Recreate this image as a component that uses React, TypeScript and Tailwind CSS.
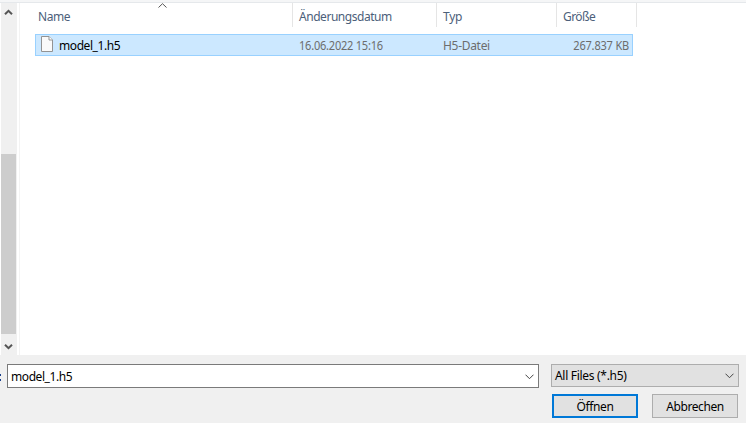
import type { ReactNode } from "react";

function Chevron({ d, w, h, className }: { d: string; w: number; h: number; className: string }) {
  return (
    <svg width={w} height={h} viewBox={`0 0 ${w} ${h}`} fill="none" stroke="currentColor" className={`shrink-0 ${className}`}>
      <path d={d} />
    </svg>
  );
}

function HeaderCell({ children, className }: { children: ReactNode; className: string }) {
  return (
    <div className={`h-6 border-r border-[#e5e5e5] pt-[6px] leading-4 text-[#4c607a] ${className}`}>
      {children}
    </div>
  );
}

function FileIcon() {
  return (
    <svg width="12" height="16" viewBox="0 0 12 16" className="-mt-[2px] shrink-0">
      <path d="M0.5 0.5H8L11.5 4V15.5H0.5Z" fill="#fafafa" stroke="#939393" />
      <path d="M8 0.5V4H11.5" fill="#ffffff" stroke="#939393" />
    </svg>
  );
}

export default function App() {
  return (
    <div className="flex h-[423px] w-[746px] flex-col overflow-hidden bg-white font-['Noto_Sans','Open_Sans',sans-serif] text-[12px] whitespace-nowrap">
      <div className="h-[3px] shrink-0 border-b border-[#e5e8eb] bg-[#f5f6f7]" />
      <div className="flex h-[352px] shrink-0">
        <div className="ml-px flex w-4 flex-col bg-[#f0f0f0]">
          <div className="flex h-4 w-full pt-[6px] pl-[3px] text-[#555]">
            <Chevron w={9} h={7} d="M1 5.3L4.5 1.8L8 5.3" className="[stroke-width:2]" />
          </div>
          <div className="mt-[135px] h-[180px] w-[15px] self-start bg-[#cdcdcd]" />
          <div className="flex w-full pt-[9px] pl-[3px] text-[#555]">
            <Chevron w={9} h={7} d="M1 1.7L4.5 5.2L8 1.7" className="[stroke-width:2]" />
          </div>
        </div>
        <div className="ml-[2px] w-[727px] border-l border-[#f3f3f3]">
          <div className="flex">
            <HeaderCell className="relative w-[273px] pl-[18px]">
              <span className="tracking-[-0.4px]">Name</span>
              <Chevron w={9} h={5} d="M0.5 4.5L4.5 0.7L8.5 4.5" className="absolute top-0 left-[138px] text-[#555]" />
            </HeaderCell>
            <HeaderCell className="w-36 pl-[6px] tracking-[-0.46px]">Änderungsdatum</HeaderCell>
            <HeaderCell className="w-[120px] pl-[6px] tracking-[-0.3px]">Typ</HeaderCell>
            <HeaderCell className="w-20 pl-[6px] tracking-[-0.55px]">Größe</HeaderCell>
          </div>
          <div className="mt-[7px] ml-[15px] flex h-[22px] w-[598px] border border-[#99d1ff] bg-[#cce8ff] pt-[3px] leading-4 text-[#6d6d6d]">
            <div className="flex w-[263px] pl-[5px] text-black">
              <FileIcon />
              <span className="ml-[6px] tracking-[-0.42px]">model_1.h5</span>
            </div>
            <div className="w-36 origin-left scale-x-[0.92] tracking-[-0.25px]">16.06.2022 15:16</div>
            <div className="w-[110px] tracking-[-0.3px]">H5-Datei</div>
            <div className="mr-[3px] flex-1 origin-right scale-x-[0.92] text-right tracking-[-0.22px]">267.837 KB</div>
          </div>
        </div>
      </div>
      <div className="h-[68px] shrink-0 bg-[#f0f0f0] pt-[9px] text-black">
        <div className="flex">
          <div className="flex w-[7px] flex-col gap-[3px] pt-[10px]">
            <i className="h-[2px] w-px bg-[#1a3f8c]" />
            <i className="h-[2px] w-px bg-[#1a3f8c]" />
          </div>
          <div className="flex h-6 w-[532px] items-center justify-between border border-[#7a7a7a] bg-white pr-[4px] pl-[3px]">
            <span className="pt-[2px] tracking-[-0.42px]">model_1.h5</span>
            <Chevron w={9} h={6} d="M0.5 0.7L4.5 4.7L8.5 0.7" className="mt-px text-[#444]" />
          </div>
          <div className="ml-3 flex h-[23px] w-[188px] items-center justify-between border border-[#adadad] bg-[#e1e1e1] pr-[4px] pl-[3px]">
            <span className="pt-px tracking-[-0.3px]">All Files (*.h5)</span>
            <Chevron w={9} h={6} d="M0.5 0.7L4.5 4.7L8.5 0.7" className="text-[#444]" />
          </div>
        </div>
        <div className="mt-[6px] ml-[552px] flex gap-[14px]">
          <button className="h-6 w-[86px] border-2 border-[#0078d7] bg-[#e1e1e1] pt-px leading-5 tracking-[-0.4px]">Öffnen</button>
          <button className="h-6 w-[86px] border border-[#adadad] bg-[#e1e1e1] pt-px leading-[22px] tracking-[-0.4px]">Abbrechen</button>
        </div>
      </div>
    </div>
  );
}
